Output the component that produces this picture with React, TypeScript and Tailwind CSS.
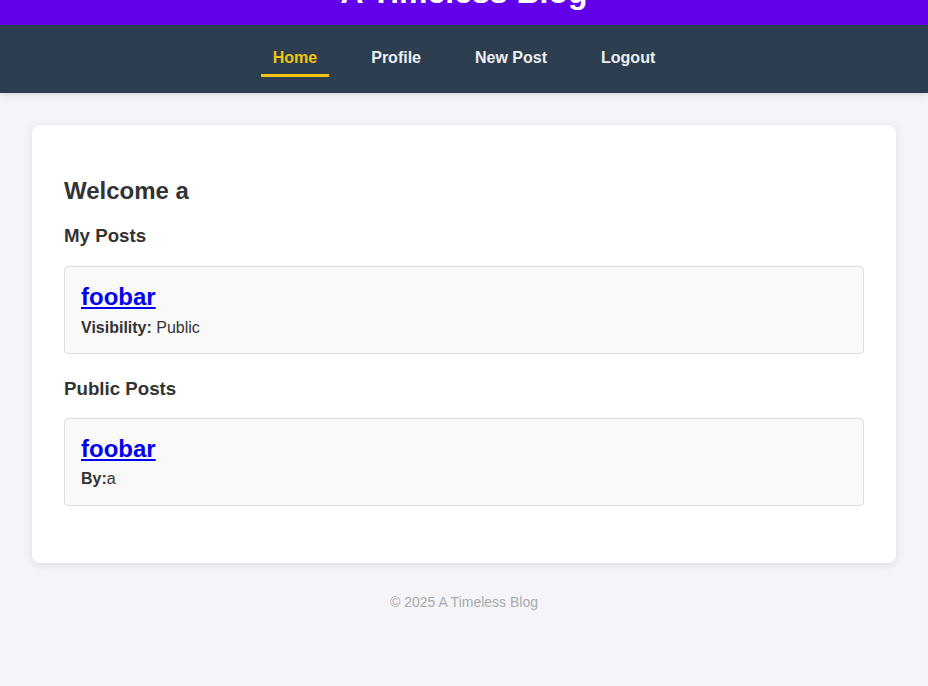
import React from "react";

const font = { fontFamily: '"Liberation Sans", Arial, sans-serif' };

function NavLink({ label, active }: { label: string; active?: boolean }) {
  return (
    <a
      href="#"
      className={
        active
          ? "block px-3 pt-[9px] pb-[7px] text-base font-bold leading-[18.4px] text-[#f1c40f] border-b-[3px] border-[#f1c40f] no-underline"
          : "block px-3 pt-[9px] pb-[7px] text-base font-bold leading-[18.4px] text-[#ecf0f1] border-b-[3px] border-transparent no-underline"
      }
    >
      {label}
    </a>
  );
}

function PostBox({ children }: { children: React.ReactNode }) {
  return (
    <div className="bg-[#f9f9f9] border border-[#ddd] rounded-[4px] p-4">
      {children}
    </div>
  );
}

export default function App() {
  return (
    <div className="min-h-[686px] bg-[#f4f4f9] text-[#333]" style={font}>
      <header className="h-[25px] overflow-hidden bg-[#6200ea] text-white text-center">
        <h1 className="mt-[-26px] text-[32px] font-bold leading-[37px]">A Timeless Blog</h1>
      </header>
      <nav className="h-[68px] bg-[#2c3e50] flex justify-center items-start pt-[15px] gap-[30px] shadow-[0_2px_6px_rgba(0,0,0,0.12)] relative">
        <NavLink label="Home" active />
        <NavLink label="Profile" />
        <NavLink label="New Post" />
        <NavLink label="Logout" />
      </nav>
      <main className="px-8 pt-8 pb-[31px]">
        <div className="bg-white rounded-lg p-8 shadow-[0_2px_10px_rgba(0,0,0,0.1)]">
          <h2 className="mt-5 mb-5 text-2xl font-bold leading-[27.6px] text-[#333]">Welcome a</h2>
          <h3 className="mb-5 text-[18.72px] font-bold leading-[21.5px] text-[#333]">My Posts</h3>
          <PostBox>
            <h2 className="mb-2 text-2xl font-bold leading-[27.6px]">
              <a href="#" className="text-[#0000ee] underline">foobar</a>
            </h2>
            <p className="text-base leading-[18.4px]">
              <strong>Visibility:</strong> Public
            </p>
          </PostBox>
          <h3 className="mt-6 mb-[18px] text-[18.72px] font-bold leading-[21.5px] text-[#333]">Public Posts</h3>
          <PostBox>
            <h2 className="mb-2 text-2xl font-bold leading-[27.6px]">
              <a href="#" className="text-[#0000ee] underline">foobar</a>
            </h2>
            <p className="text-base leading-[18.4px]">
              <strong>By:</strong>a
            </p>
          </PostBox>
          <div className="h-[25px]" />
        </div>
      </main>
      <footer className="text-center text-sm leading-4 text-[#aaa]">© 2025 A Timeless Blog</footer>
    </div>
  );
}
